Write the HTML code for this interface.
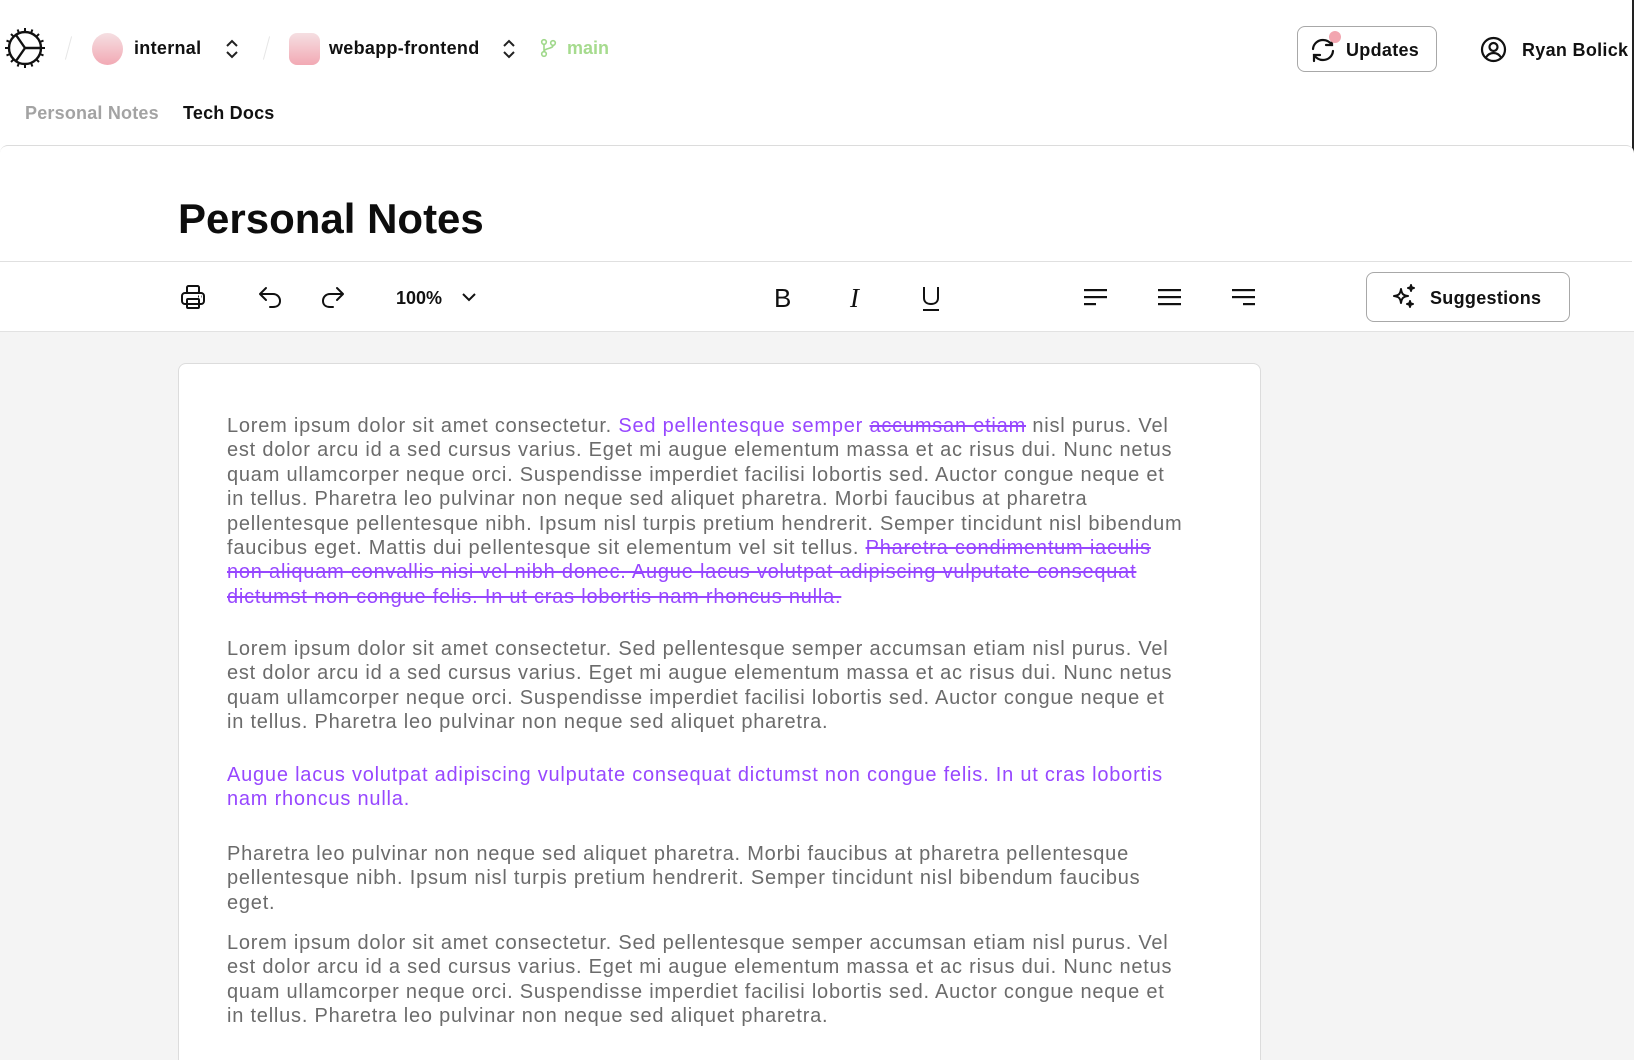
<!DOCTYPE html>
<html><head><meta charset="utf-8"><style>
*{margin:0;padding:0;box-sizing:border-box}
html,body{width:1634px;height:1060px;overflow:hidden}
body{background:#fff;font-family:"Liberation Sans",sans-serif;position:relative;color:#111}
.abs{position:absolute}
.b{font-weight:bold}
.hdr{font-size:18px;font-weight:bold;color:#111;letter-spacing:0.3px}
.doc{position:absolute;left:0;top:145px;width:1634px;height:915px;border-top:1px solid #dcdcdc;border-radius:8px 8px 0 0;background:#fff}
.gray{position:absolute;left:0;top:331px;width:1634px;height:729px;background:#f4f4f4;border-top:1px solid #e2e2e2}
.paper{position:absolute;left:178px;top:363px;width:1083px;height:697px;background:#fff;border:1px solid #dcdcdc;border-bottom:none;border-radius:8px 8px 0 0}
.txt{position:absolute;left:227px;font-size:20px;letter-spacing:0.78px;line-height:24.4px;color:#6b6b6b;white-space:nowrap}
.p{color:#9747ff}
.s{color:#9747ff;text-decoration:line-through}
</style></head><body>
<svg class="abs" style="left:3px;top:26px" width="44" height="44" viewBox="0 0 44 44" fill="none" stroke="#111" stroke-width="2.4">
<circle cx="22" cy="22" r="16"/>
<path d="M22 22H38M22 22L13 9M22 22L13 35"/>
<g stroke-width="2">
<path d="M22 6V2M22 38V42M6 22H2M38 22H42M10.7 10.7L8 8M33.3 33.3L36 36M33.3 10.7L36 8M10.7 33.3L8 36M16 7.2L14.6 3.5M28 7.2L29.4 3.5M16 36.8L14.6 40.5M28 36.8L29.4 40.5M7.2 16L3.5 14.6M7.2 28L3.5 29.4M36.8 16L40.5 14.6M36.8 28L40.5 29.4"/>
</g></svg>
<div class="abs" style="left:68px;top:36px;width:1px;height:24px;background:#e6e6e6;transform:rotate(15deg)"></div>
<div class="abs" style="left:92px;top:33px;width:31px;height:32px;border-radius:50%;background:linear-gradient(#f5dfe2,#f2a9b4)"></div>
<div class="abs hdr" style="left:134px;top:38px">internal</div>
<svg class="abs" style="left:224px;top:37px" width="16" height="24" viewBox="0 0 16 24" fill="none" stroke="#222" stroke-width="2"><path d="M3 9L8 4L13 9M3 15L8 20L13 15"/></svg>
<div class="abs" style="left:266px;top:36px;width:1px;height:24px;background:#e6e6e6;transform:rotate(15deg)"></div>
<div class="abs" style="left:289px;top:33px;width:31px;height:32px;border-radius:8px;background:linear-gradient(#f5dfe2,#f2a9b4)"></div>
<div class="abs hdr" style="left:329px;top:38px">webapp-frontend</div>
<svg class="abs" style="left:501px;top:37px" width="16" height="24" viewBox="0 0 16 24" fill="none" stroke="#222" stroke-width="2"><path d="M3 9L8 4L13 9M3 15L8 20L13 15"/></svg>
<svg class="abs" style="left:540px;top:38px" width="18" height="20" viewBox="0 0 18 20" fill="none" stroke="#9fd88a" stroke-width="1.6"><circle cx="4" cy="4" r="2.3"/><circle cx="13" cy="5" r="2.3"/><circle cx="4" cy="16" r="2.3"/><path d="M4 6.5V13.5M13 7.5C13 11 4 10 4 13.5"/></svg>
<div class="abs" style="left:567px;top:38px;font-size:18px;font-weight:bold;color:#a6db8e">main</div>

<div class="abs" style="left:1297px;top:26px;width:140px;height:46px;border:1px solid #a8a8a8;border-radius:8px"></div>
<svg class="abs" style="left:1308px;top:35px" width="30" height="30" viewBox="0 0 30 30" fill="none" stroke="#111" stroke-width="2.2" stroke-linecap="round"><path d="M5 14C5.5 8.5 10 5 15 5C19 5 22 7 24 10M25 16C24.5 21.5 20 25 15 25C11 25 8 23 6 20"/><path d="M24 4V10H18M6 26V20H12"/></svg>
<div class="abs" style="left:1329px;top:31px;width:12px;height:12px;border-radius:50%;background:#f2a6b0"></div>
<div class="abs hdr" style="left:1346px;top:40px">Updates</div>
<svg class="abs" style="left:1480px;top:36px" width="27" height="27" viewBox="0 0 27 27" fill="none" stroke="#111" stroke-width="2.2"><circle cx="13.5" cy="13.5" r="11.5"/><circle cx="13.5" cy="11" r="4"/><path d="M6 21.5C8 18 11 17 13.5 17C16 17 19 18 21 21.5"/></svg>
<div class="abs hdr" style="left:1522px;top:40px">Ryan Bolick</div>
<div class="abs" style="left:1632px;top:0;width:2px;height:1060px;background:#222"></div>

<div class="abs" style="left:25px;top:103px;font-size:18px;font-weight:bold;color:#a3a3a3;letter-spacing:0.2px">Personal Notes</div>
<div class="abs" style="left:183px;top:103px;font-size:18px;font-weight:bold;color:#111;letter-spacing:0.2px">Tech Docs</div>

<div class="doc"></div>
<div class="abs b" style="left:178px;top:195px;font-size:42px;color:#0d0d0d">Personal Notes</div>
<div class="abs" style="left:0;top:261px;width:1632px;height:1px;background:#e0e0e0"></div>

<svg class="abs" style="left:179px;top:283px" width="28" height="28" viewBox="0 0 28 28" fill="none" stroke="#111" stroke-width="2"><rect x="8" y="3" width="12" height="7" rx="1.5"/><rect x="3" y="10" width="22" height="11" rx="3"/><rect x="8" y="16" width="12" height="9" rx="1"/><path d="M19 13.5h1M22 13.5h0.5"/></svg>
<svg class="abs" style="left:256px;top:283px" width="28" height="28" viewBox="0 0 28 28" fill="none" stroke="#111" stroke-width="2" stroke-linecap="round" stroke-linejoin="round"><path d="M10 5L4 11L10 17M4 11H17C21 11 24 14 24 18C24 22 21 24 17 24H14"/></svg>
<svg class="abs" style="left:319px;top:283px" width="28" height="28" viewBox="0 0 28 28" fill="none" stroke="#111" stroke-width="2" stroke-linecap="round" stroke-linejoin="round"><path d="M18 5L24 11L18 17M24 11H11C7 11 4 14 4 18C4 22 7 24 11 24H14"/></svg>
<div class="abs b" style="left:396px;top:288px;font-size:18px">100%</div>
<svg class="abs" style="left:461px;top:291px" width="16" height="12" viewBox="0 0 16 12" fill="none" stroke="#111" stroke-width="2"><path d="M2 3L8 9L14 3"/></svg>
<div class="abs" style="left:774px;top:283px;font-size:26px;color:#111">B</div>
<div class="abs" style="left:850px;top:283px;font-family:'Liberation Serif',serif;font-style:italic;font-size:27px;color:#111">I</div>
<svg class="abs" style="left:920px;top:285px" width="22" height="27" viewBox="0 0 22 27" fill="none" stroke="#111" stroke-width="2"><path d="M4 2V13C4 17 7 19 11 19C15 19 18 17 18 13V2M3 25H19"/></svg>
<svg class="abs" style="left:1082px;top:284px" width="28" height="24" fill="#111"><rect x="2" y="5" width="23" height="2.2"/><rect x="2" y="12" width="23" height="2.2"/><rect x="2" y="19" width="12" height="2.2"/></svg>
<svg class="abs" style="left:1156px;top:284px" width="28" height="24" fill="#111"><rect x="2" y="5" width="23" height="2.2"/><rect x="2" y="12" width="23" height="2.2"/><rect x="2" y="19" width="23" height="2.2"/></svg>
<svg class="abs" style="left:1230px;top:284px" width="28" height="24" fill="#111"><rect x="2" y="5" width="23" height="2.2"/><rect x="2" y="12" width="23" height="2.2"/><rect x="13" y="19" width="12" height="2.2"/></svg>
<div class="abs" style="left:1366px;top:272px;width:204px;height:50px;border:1px solid #a8a8a8;border-radius:8px"></div>
<svg class="abs" style="left:1390px;top:283px" width="28" height="28" viewBox="0 0 28 28" fill="none" stroke="#111" stroke-width="2" stroke-linejoin="round"><path d="M11 6C11.8 11 13 12.3 18 13C13 13.8 11.8 15 11 20C10.2 15 9 13.8 4 13C9 12.3 10.2 11 11 6Z"/><path d="M21 2C21.4 4.3 21.8 4.6 24 5C21.8 5.4 21.4 5.8 21 8C20.6 5.8 20.2 5.4 18 5C20.2 4.6 20.6 4.3 21 2Z"/><path d="M20 18C20.4 20.3 20.8 20.6 23 21C20.8 21.4 20.4 21.8 20 24C19.6 21.8 19.2 21.4 17 21C19.2 20.6 19.6 20.3 20 18Z" fill="#111"/></svg>
<div class="abs hdr" style="left:1430px;top:288px">Suggestions</div>

<div class="gray"></div>
<div class="paper"></div>

<div class="txt" style="top:414px">
<div>Lorem ipsum dolor sit amet consectetur. <span class="p">Sed pellentesque semper</span> <span class="s">accumsan etiam</span> nisl purus. Vel</div>
<div>est dolor arcu id a sed cursus varius. Eget mi augue elementum massa et ac risus dui. Nunc netus</div>
<div>quam ullamcorper neque orci. Suspendisse imperdiet facilisi lobortis sed. Auctor congue neque et</div>
<div>in tellus. Pharetra leo pulvinar non neque sed aliquet pharetra. Morbi faucibus at pharetra</div>
<div>pellentesque pellentesque nibh. Ipsum nisl turpis pretium hendrerit. Semper tincidunt nisl bibendum</div>
<div>faucibus eget. Mattis dui pellentesque sit elementum vel sit tellus. <span class="s">Pharetra condimentum iaculis</span></div>
<div><span class="s">non aliquam convallis nisi vel nibh donec. Augue lacus volutpat adipiscing vulputate consequat</span></div>
<div><span class="s">dictumst non congue felis. In ut cras lobortis nam rhoncus nulla.</span></div>
</div>
<div class="txt" style="top:637px">
<div>Lorem ipsum dolor sit amet consectetur. Sed pellentesque semper accumsan etiam nisl purus. Vel</div>
<div>est dolor arcu id a sed cursus varius. Eget mi augue elementum massa et ac risus dui. Nunc netus</div>
<div>quam ullamcorper neque orci. Suspendisse imperdiet facilisi lobortis sed. Auctor congue neque et</div>
<div>in tellus. Pharetra leo pulvinar non neque sed aliquet pharetra.</div>
</div>
<div class="txt p" style="top:763px">
<div>Augue lacus volutpat adipiscing vulputate consequat dictumst non congue felis. In ut cras lobortis</div>
<div>nam rhoncus nulla.</div>
</div>
<div class="txt" style="top:842px">
<div>Pharetra leo pulvinar non neque sed aliquet pharetra. Morbi faucibus at pharetra pellentesque</div>
<div>pellentesque nibh. Ipsum nisl turpis pretium hendrerit. Semper tincidunt nisl bibendum faucibus</div>
<div>eget.</div>
</div>
<div class="txt" style="top:931px">
<div>Lorem ipsum dolor sit amet consectetur. Sed pellentesque semper accumsan etiam nisl purus. Vel</div>
<div>est dolor arcu id a sed cursus varius. Eget mi augue elementum massa et ac risus dui. Nunc netus</div>
<div>quam ullamcorper neque orci. Suspendisse imperdiet facilisi lobortis sed. Auctor congue neque et</div>
<div>in tellus. Pharetra leo pulvinar non neque sed aliquet pharetra.</div>
</div>
</body></html>
